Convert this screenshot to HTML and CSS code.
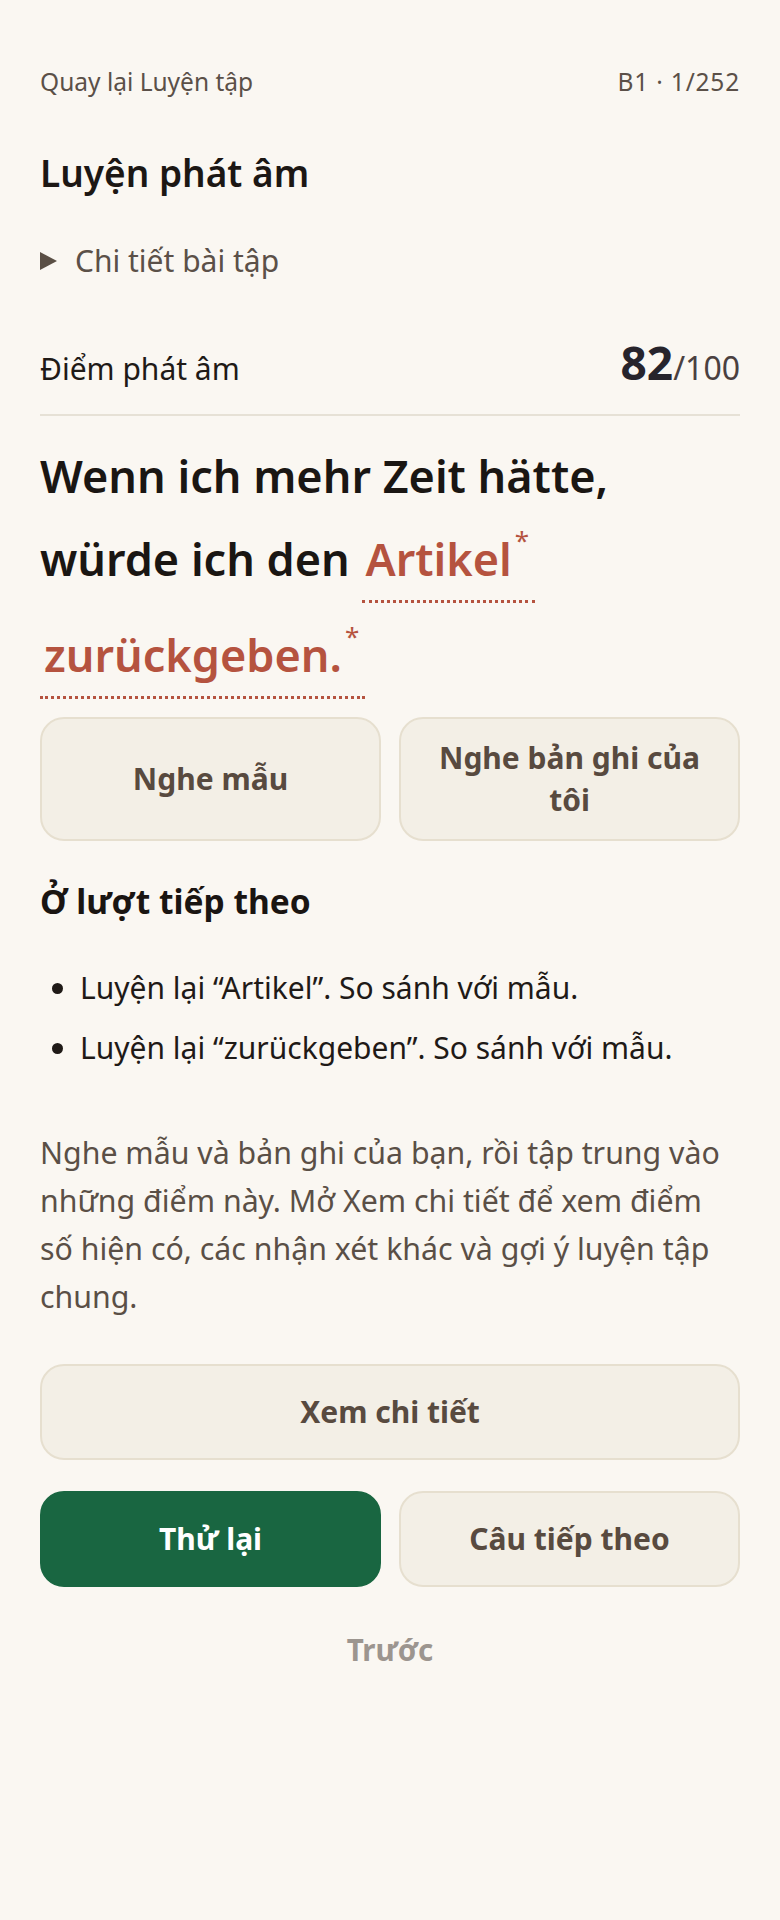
FILE: index.html
```html
<!DOCTYPE html>
<html lang="vi">
<head>
<meta charset="utf-8">
<title>Luyện phát âm</title>
<link rel="stylesheet" href="styles.css">
</head>
<body>
<main class="page">
  <header class="topbar">
    <a class="back" href="#">Quay lại Luyện tập</a>
    <span class="meta">B1 · 1/252</span>
  </header>

  <h1 class="title">Luyện phát âm</h1>

  <details class="details">
    <summary><span class="tri"></span>Chi tiết bài tập</summary>
  </details>

  <div class="score-row">
    <span class="score-label">Điểm phát âm</span>
    <span class="score"><b>82</b>/100</span>
  </div>

  <p class="sentence">Wenn ich mehr Zeit hätte, würde ich den <span class="word">Artikel<sup>*</sup></span> <span class="word">zurückgeben.<sup>*</sup></span></p>

  <div class="pair">
    <button class="btn">Nghe mẫu</button>
    <button class="btn">Nghe bản ghi của tôi</button>
  </div>

  <h2 class="sub">Ở lượt tiếp theo</h2>
  <ul class="tips">
    <li>Luyện lại “Artikel”. So sánh với mẫu.</li>
    <li>Luyện lại “zurückgeben”. So sánh với mẫu.</li>
  </ul>

  <p class="note">Nghe mẫu và bản ghi của bạn, rồi tập trung vào những điểm này. Mở Xem chi tiết để xem điểm số hiện có, các nhận xét khác và gợi ý luyện tập chung.</p>

  <button class="btn wide">Xem chi tiết</button>

  <div class="pair actions">
    <button class="btn primary">Thử lại</button>
    <button class="btn">Câu tiếp theo</button>
  </div>

  <button class="link">Trước</button>
</main>
</body>
</html>
```

FILE: styles.css
```css
* { box-sizing: border-box; }
html, body { margin: 0; padding: 0; }
body {
  background: #faf7f2;
  color: #1f1a17;
  font-family: "Noto Sans", "Open Sans", sans-serif;
}
.page {
  padding: 62px 40px 40px;
  display: flex;
  flex-direction: column;
}
.topbar {
  display: flex;
  justify-content: space-between;
  align-items: center;
  font-size: 24.5px;
  line-height: 40px;
  color: #5b5048;
}
.back { color: #5b5048; text-decoration: none; }
.meta { letter-spacing: 0.8px; }
.title {
  margin: 45px 0 0;
  font-size: 37px;
  font-weight: 600;
  line-height: 52px;
  color: #1c1714;
}
.details { margin-top: 42px; }
.details summary {
  list-style: none;
  display: flex;
  align-items: center;
  gap: 18px;
  font-size: 30px;
  line-height: 40px;
  color: #5b5048;
  cursor: pointer;
}
.details summary::-webkit-details-marker { display: none; }
.tri {
  width: 0; height: 0;
  border-top: 9px solid transparent;
  border-bottom: 9px solid transparent;
  border-left: 17px solid #5a4f45;
}
.score-row {
  margin-top: 53px;
  display: flex;
  justify-content: space-between;
  align-items: baseline;
  line-height: 56px;
  padding-bottom: 17px;
  border-bottom: 2px solid #e6e1d6;
}
.score-label { font-size: 30px; color: #1f1a17; }
.score { font-size: 32px; color: #4a4040; }
.score b { font-size: 46px; font-weight: 700; color: #27242c; }
.sentence {
  margin: 18px 0 0;
  font-size: 45px;
  font-weight: 600;
  line-height: 83px;
  color: #1a1613;
}
.word {
  display: inline-block;
  color: #b5533f;
  padding: 0 6px 0 4px;
  margin-bottom: 10px;
  border-bottom: 3px dotted #b5533f;
}
.word sup {
  font-size: 26px;
  font-weight: 400;
  line-height: 0;
  vertical-align: 26px;
  margin-left: 3px;
}
.pair {
  margin-top: 8px;
  display: grid;
  grid-template-columns: 1fr 1fr;
  gap: 18px;
}
.btn {
  font-family: inherit;
  font-size: 30px;
  font-weight: 700;
  line-height: 42px;
  color: #584a3f;
  background: #f3efe6;
  border: 2px solid #e6dfcf;
  border-radius: 24px;
  padding: 18px 20px;
  text-align: center;
}
.sub {
  margin: 36px 0 0;
  font-size: 33.5px;
  font-weight: 700;
  line-height: 48px;
  color: #1a1512;
}
.tips {
  margin: 33px 0 0;
  padding-left: 40px;
  font-size: 30px;
  line-height: 60px;
  color: #1f1a17;
}
.note {
  margin: 51px 0 0;
  padding-right: 6px;
  font-size: 30.3px;
  line-height: 48px;
  color: #5a4f46;
}
.wide {
  margin-top: 43px;
  padding: 25px 20px;
  border-radius: 24px;
}
.actions { margin-top: 31px; }
.actions .btn { padding: 25px 20px; }
.primary {
  background: #196641;
  border-color: #196641;
  color: #ffffff;
}
.link {
  margin: 43px auto 0;
  padding: 0;
  font-family: inherit;
  font-size: 29.5px;
  font-weight: 700;
  line-height: 40px;
  color: #9c958f;
  background: none;
  border: 0;
}
```
